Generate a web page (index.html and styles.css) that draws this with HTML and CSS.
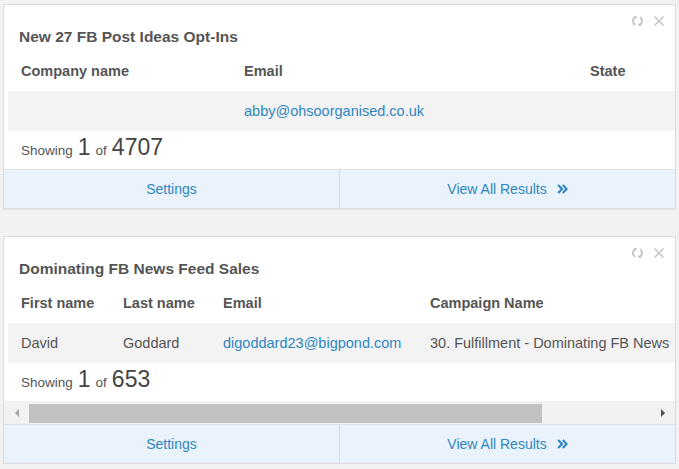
FILE: index.html
```html
<!DOCTYPE html>
<html lang="en">
<head>
<meta charset="utf-8">
<title>Widgets</title>
<link rel="stylesheet" href="styles.css">
</head>
<body>
<div class="page">
  <section class="card">
    <div class="tools">
      <svg class="ico" width="13" height="12" viewBox="0 0 13 12" aria-hidden="true">
        <path d="M4 2.3A4.3 4.3 0 0 0 4 9.7" fill="none" stroke="#c2c2c2" stroke-width="1.7"/>
        <path d="M9 9.7A4.3 4.3 0 0 0 9 2.3" fill="none" stroke="#c2c2c2" stroke-width="1.7"/>
        <path d="M3 0.6L6.4 2.1 3.4 4.4Z" fill="#c2c2c2"/>
        <path d="M10 11.4L6.6 9.9 9.6 7.6Z" fill="#c2c2c2"/>
      </svg>
      <svg class="ico" width="12" height="12" viewBox="0 0 12 12" aria-hidden="true">
        <path d="M1.5 1.5L10.5 10.5M10.5 1.5L1.5 10.5" stroke="#c2c2c2" stroke-width="1.4"/>
      </svg>
    </div>
    <h2 class="card-title">New 27 FB Post Ideas Opt-Ins</h2>
    <div class="grid grid-3">
      <div class="th">Company name</div>
      <div class="th">Email</div>
      <div class="th">State</div>
      <div class="td"></div>
      <div class="td"><a class="link" href="#">abby@ohsoorganised.co.uk</a></div>
      <div class="td"></div>
    </div>
    <div class="showing"><span class="sm">Showing</span><span class="big">1</span><span class="sm">of</span><span class="big">4707</span></div>
    <div class="card-footer">
      <a class="footer-link" href="#">Settings</a>
      <span class="divider"></span>
      <a class="footer-link" href="#">View All Results
        <svg class="chev" width="11" height="10" viewBox="0 0 11 10" aria-hidden="true"><path d="M1.2 1l3.8 4-3.8 4M5.8 1l3.8 4-3.8 4" fill="none" stroke="#2f86c1" stroke-width="2.1"/></svg>
      </a>
    </div>
  </section>

  <section class="card">
    <div class="tools">
      <svg class="ico" width="13" height="12" viewBox="0 0 13 12" aria-hidden="true">
        <path d="M4 2.3A4.3 4.3 0 0 0 4 9.7" fill="none" stroke="#c2c2c2" stroke-width="1.7"/>
        <path d="M9 9.7A4.3 4.3 0 0 0 9 2.3" fill="none" stroke="#c2c2c2" stroke-width="1.7"/>
        <path d="M3 0.6L6.4 2.1 3.4 4.4Z" fill="#c2c2c2"/>
        <path d="M10 11.4L6.6 9.9 9.6 7.6Z" fill="#c2c2c2"/>
      </svg>
      <svg class="ico" width="12" height="12" viewBox="0 0 12 12" aria-hidden="true">
        <path d="M1.5 1.5L10.5 10.5M10.5 1.5L1.5 10.5" stroke="#c2c2c2" stroke-width="1.4"/>
      </svg>
    </div>
    <h2 class="card-title">Dominating FB News Feed Sales</h2>
    <div class="grid grid-4">
      <div class="th">First name</div>
      <div class="th">Last name</div>
      <div class="th">Email</div>
      <div class="th">Campaign Name</div>
      <div class="td">David</div>
      <div class="td">Goddard</div>
      <div class="td"><a class="link" href="#">digoddard23@bigpond.com</a></div>
      <div class="td">30. Fulfillment - Dominating FB News</div>
    </div>
    <div class="showing"><span class="sm">Showing</span><span class="big">1</span><span class="sm">of</span><span class="big">653</span></div>
    <div class="hscroll">
      <div class="sb-btn"><span class="tri tri-left"></span></div>
      <div class="sb-track"><div class="sb-thumb"></div></div>
      <div class="sb-btn"><span class="tri tri-right"></span></div>
    </div>
    <div class="card-footer">
      <a class="footer-link" href="#">Settings</a>
      <span class="divider"></span>
      <a class="footer-link" href="#">View All Results
        <svg class="chev" width="11" height="10" viewBox="0 0 11 10" aria-hidden="true"><path d="M1.2 1l3.8 4-3.8 4M5.8 1l3.8 4-3.8 4" fill="none" stroke="#2f86c1" stroke-width="2.1"/></svg>
      </a>
    </div>
  </section>
</div>
</body>
</html>
```

FILE: styles.css
```css
* { box-sizing: border-box; }

html, body {
  margin: 0;
  padding: 0;
  background: #f2f2f2;
  font-family: "Liberation Sans", Arial, sans-serif;
  color: #555;
}

.page {
  padding: 4px 3px 0 3px;
  display: flex;
  flex-direction: column;
  gap: 27px;
}

.card {
  background: #fff;
  border: 1px solid #dcdcdc;
  box-shadow: 0 1px 1px rgba(0, 0, 0, 0.04);
  overflow: hidden;
}

.tools {
  display: flex;
  justify-content: flex-end;
  align-items: center;
  gap: 9px;
  height: 12px;
  margin-top: 10px;
  padding-right: 10px;
}

.ico { display: block; }

.card-title {
  margin: 0;
  padding-left: 15px;
  font-size: 15.5px;
  line-height: 20px;
  font-weight: bold;
  color: #555;
}

.grid {
  display: grid;
  margin: 4px 0 0 4px;
  white-space: nowrap;
  overflow: hidden;
}

.grid-3 { grid-template-columns: 223px 346px 1fr; }
.grid-4 { grid-template-columns: 102px 100px 207px 1fr; }

.th, .td {
  height: 40px;
  display: flex;
  align-items: center;
  padding-left: 13px;
  font-size: 14.5px;
  overflow: hidden;
}

.th {
  font-weight: bold;
  color: #555;
}

.td {
  background: #f3f3f3;
  color: #555;
}

.link {
  color: #2f86c1;
  text-decoration: none;
}

.showing {
  height: 38px;
  padding: 3px 0 0 17px;
  display: flex;
  align-items: baseline;
  gap: 5px;
  line-height: 26px;
}

.sm {
  font-size: 13.5px;
  color: #555;
}

.big {
  font-size: 23px;
  color: #444;
}

.hscroll {
  display: flex;
  height: 23px;
  background: #f1f1f1;
}

.sb-btn {
  width: 25px;
  display: flex;
  align-items: center;
  justify-content: center;
}

.sb-track {
  flex: 1;
  padding: 3px 0 1px 0;
}

.sb-thumb {
  width: 82.6%;
  height: 100%;
  background: #c1c1c1;
}

.tri {
  width: 0;
  height: 0;
  border-top: 4px solid transparent;
  border-bottom: 4px solid transparent;
}

.tri-left { border-right: 4px solid #a3a3a3; }
.tri-right { border-left: 4px solid #505050; }

.card-footer {
  display: flex;
  height: 39px;
  border-top: 1px solid #dbe3e8;
  background: #eaf3fb;
}

.footer-link {
  flex: 1;
  display: flex;
  align-items: center;
  justify-content: center;
  gap: 10px;
  font-size: 14px;
  color: #2f86c1;
  text-decoration: none;
}

.divider {
  width: 1px;
  background: #d3dce2;
}

.chev { display: block; }
```
